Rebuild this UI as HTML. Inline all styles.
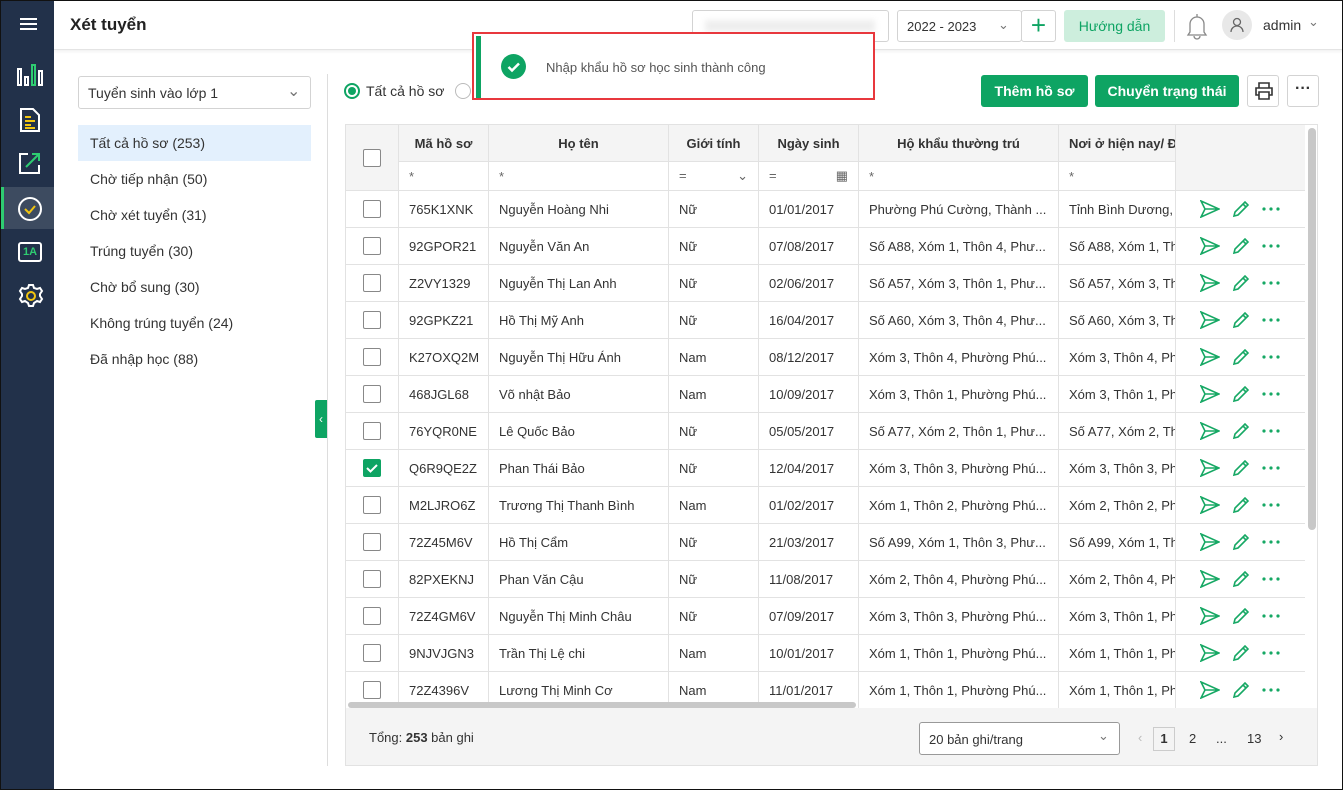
<!DOCTYPE html>
<html><head><meta charset="utf-8"><style>
*{box-sizing:border-box;margin:0;padding:0}
body{width:1343px;height:790px;overflow:hidden;font-family:"Liberation Sans",sans-serif;font-size:13px;color:#333;background:#fff;position:relative}
.frame{position:absolute;inset:0;border:1px solid #111;pointer-events:none;z-index:50}
.side{position:absolute;left:0;top:0;width:54px;height:790px;background:#22314a}
.a{position:absolute}
.top{position:absolute;left:54px;top:0;right:0;height:50px;border-bottom:1px solid #e4e4e4;box-shadow:0 2px 3px rgba(0,0,0,.05)}
.btn{position:absolute;background:#0ea463;color:#fff;font-weight:bold;font-size:14px;border-radius:3px;text-align:center;line-height:32px}
.box{position:absolute;border:1px solid #d3d3d3;border-radius:3px;background:#fff}
.menu div{height:36px;line-height:36px;padding-left:12px;font-size:14px;color:#333}
.tw{position:absolute;left:345px;top:124px;width:960px;height:584px;overflow:hidden}
table{border-collapse:collapse;table-layout:fixed;width:960px}
td,th{border:1px solid #e2e2e2;height:37px;white-space:nowrap;overflow:hidden;padding:0 10px;font-weight:normal;font-size:13px}
th{background:#f4f4f4;font-weight:bold;color:#333;height:37px}
tr.f td{background:#fff;height:29px;color:#666}
td.cb,th.cb{padding:0;text-align:center}
.chk{display:inline-block;width:18px;height:18px;border:1px solid #888;border-radius:2px;vertical-align:middle;background:#fff}
.chk.on{background:#0ea463;border-color:#0ea463;position:relative}
.act{padding:0 0 0 24px;border-right:none}
</style></head><body>
<div class="side">
 <div class="a" style="left:20px;top:18px;width:17px;height:2px;background:#fff;box-shadow:0 5px 0 #fff,0 10px 0 #fff"></div>
 <svg class="a" style="left:16px;top:63px" width="28" height="24" viewBox="0 0 28 24" fill="none" stroke="#fff" stroke-width="2"><rect x="2" y="6" width="3" height="16"/><rect x="9" y="14" width="3" height="8"/><rect x="16" y="2" width="3" height="20" stroke="#2ecc71"/><rect x="23" y="8" width="3" height="14"/></svg>
 <svg class="a" style="left:19px;top:107px" width="22" height="26" viewBox="0 0 22 26" fill="none" stroke="#fff" stroke-width="2"><path d="M2 2h12l6 6v16H2z"/><path d="M6 10h6M6 14h10M6 18h6M6 21h10" stroke="#f1c40f"/></svg>
 <svg class="a" style="left:18px;top:151px" width="24" height="24" viewBox="0 0 24 24" fill="none" stroke="#fff" stroke-width="2"><path d="M10 3H2v19h19v-8"/><path d="M8 16L21 3M14 3h7v7" stroke="#2ecc71"/></svg>
 <div class="a" style="left:0;top:187px;width:54px;height:42px;background:#3d4b60;border-left:4px solid #2ecc71"></div>
 <svg class="a" style="left:17px;top:196px" width="26" height="26" viewBox="0 0 26 26" fill="none" stroke-width="2"><circle cx="13" cy="13" r="11" stroke="#fff"/><path d="M8 13l4 4 6-7" stroke="#f1c40f"/></svg>
 <div class="a" style="left:18px;top:242px;width:24px;height:20px;border:2px solid #fff;border-radius:3px;color:#2ecc71;font-size:11px;font-weight:bold;text-align:center;line-height:16px">1A</div>
 <svg class="a" style="left:18px;top:283px" width="26" height="26" viewBox="0 0 26 26" fill="none" stroke-width="2"><path d="M11 2h4l1 3 3 1 3-1 2 3-2 3v2l2 3-2 3-3-1-3 2-1 3h-4l-1-3-3-2-3 1-2-3 2-3v-2L2 8l2-3 3 1 3-1z" stroke="#fff"/><circle cx="13" cy="13" r="4" stroke="#f1c40f"/></svg>
</div>
<div class="top">
 <div class="a" style="left:16px;top:15px;font-size:17px;font-weight:bold;color:#222">Xét tuyển</div>
 <div class="box" style="left:638px;top:10px;width:197px;height:32px"><div class="a" style="left:12px;top:9px;width:170px;height:12px;background:#eee;filter:blur(3px)"></div></div>
 <div class="box" style="left:843px;top:10px;width:125px;height:32px"><span class="a" style="left:9px;top:8px">2022 - 2023</span><span class="a" style="left:100px;top:6px;color:#777">⌄</span></div>
 <div class="box" style="left:967px;top:10px;width:35px;height:32px;color:#0ea463;font-size:26px;text-align:center;line-height:28px">+</div>
 <div class="a" style="left:1010px;top:10px;width:101px;height:32px;background:#cdeedd;color:#0ea463;border-radius:3px;text-align:center;line-height:32px;font-size:14px">Hướng dẫn</div>
 <div class="a" style="left:1120px;top:10px;width:1px;height:32px;background:#ddd"></div>
 <svg class="a" style="left:1132px;top:12px" width="22" height="28" viewBox="0 0 22 28" fill="none" stroke="#888" stroke-width="1.3"><path d="M11 2v3M4 20V12a7 7 0 0114 0v8l2 3H2z M8 24a3 3 0 006 0"/></svg>
 <div class="a" style="left:1168px;top:10px;width:30px;height:30px;border-radius:50%;background:#e8e8e8"></div>
 <svg class="a" style="left:1176px;top:17px" width="14" height="16" viewBox="0 0 14 16" fill="none" stroke="#666" stroke-width="1.3"><circle cx="7" cy="5" r="3.5"/><path d="M1 15a6 6 0 0112 0"/></svg>
 <span class="a" style="left:1209px;top:17px;font-size:14px">admin</span><span class="a" style="left:1254px;top:14px;color:#777">⌄</span>
</div>
<div class="box" style="left:78px;top:76px;width:233px;height:33px"><span class="a" style="left:9px;top:8px;font-size:14px">Tuyển sinh vào lớp 1</span><span class="a" style="left:208px;top:4px;color:#777;font-size:16px">⌄</span></div>
<div class="menu a" style="left:78px;top:125px;width:233px">
 <div style="background:#e3f0fd">Tất cả hồ sơ (253)</div><div>Chờ tiếp nhận (50)</div><div>Chờ xét tuyển (31)</div><div>Trúng tuyển (30)</div><div>Chờ bổ sung (30)</div><div>Không trúng tuyển (24)</div><div>Đã nhập học (88)</div>
</div>
<div class="a" style="left:327px;top:74px;width:1px;height:692px;background:#ddd"></div>
<div class="a" style="left:315px;top:400px;width:12px;height:38px;background:#0ea463;color:#fff;font-size:12px;text-align:center;line-height:38px;border-radius:2px 0 0 2px">‹</div>
<div class="a" style="left:344px;top:83px;width:16px;height:16px;border:2px solid #0ea463;border-radius:50%"><div style="margin:2px;width:8px;height:8px;border-radius:50%;background:#0ea463"></div></div>
<span class="a" style="left:366px;top:83px;font-size:14px">Tất cả hồ sơ</span>
<div class="a" style="left:455px;top:83px;width:16px;height:16px;border:1px solid #bbb;border-radius:50%"></div>
<div class="btn" style="left:981px;top:75px;width:107px">Thêm hồ sơ</div>
<div class="btn" style="left:1095px;top:75px;width:144px">Chuyển trạng thái</div>
<div class="box" style="left:1247px;top:75px;width:32px;height:32px"><svg style="margin:6px 7px" width="18" height="18" viewBox="0 0 18 18" fill="none" stroke="#333" stroke-width="1.6"><path d="M4 6V1h10v5M4 13H1V6h16v7h-3M4 10h10v7H4z"/></svg></div>
<div class="box" style="left:1287px;top:75px;width:32px;height:32px;text-align:center;font-weight:bold;line-height:26px;font-size:16px">···</div>
<div class="a" style="left:345px;top:124px;width:973px;height:642px;border:1px solid #e2e2e2;background:#f4f4f4"></div>
<div class="a" style="left:1305px;top:125px;width:12px;height:583px;background:#fff"></div>
<div class="tw">
<table>
<colgroup><col style="width:53px"><col style="width:90px"><col style="width:180px"><col style="width:90px"><col style="width:100px"><col style="width:200px"><col style="width:117px"><col style="width:130px"></colgroup>
<tr><th class="cb" rowspan="2" style="height:66px"><span class="chk"></span></th><th>Mã hồ sơ</th><th>Họ tên</th><th>Giới tính</th><th>Ngày sinh</th><th>Hộ khẩu thường trú</th><th style="text-align:left">Nơi ở hiện nay/ Đ</th><th rowspan="2" style="background:#f4f4f4;border-top:none;border-right:none"></th></tr>
<tr class="f"><td>*</td><td>*</td><td>= <span style="float:right">⌄</span></td><td>= <span style="float:right">▦</span></td><td>*</td><td>*</td></tr>
<tbody id="tb" style="background:#fff"></tbody>
</table>
</div>
<div class="a" style="left:1308px;top:128px;width:8px;height:402px;background:#c8c8c8;border-radius:4px"></div>
<div class="a" style="left:348px;top:702px;width:508px;height:6px;background:#c8c8c8;border-radius:3px"></div>
<span class="a" style="left:369px;top:730px">Tổng: <b>253</b> bản ghi</span>
<div class="box" style="left:919px;top:722px;width:201px;height:33px;border-color:#999"><span class="a" style="left:9px;top:9px">20 bản ghi/trang</span><span class="a" style="left:178px;top:5px;color:#777">⌄</span></div>
<span class="a" style="left:1138px;top:730px;color:#bbb">‹</span>
<div class="a" style="left:1153px;top:727px;width:22px;height:24px;border:1px solid #ccc;text-align:center;line-height:22px;font-weight:bold">1</div>
<span class="a" style="left:1189px;top:731px">2</span><span class="a" style="left:1216px;top:731px">...</span><span class="a" style="left:1247px;top:731px">13</span><span class="a" style="left:1279px;top:729px">›</span>
<div class="a" style="left:472px;top:32px;width:403px;height:68px;border:2px solid #e8383d;background:#fff;z-index:10">
 <div class="a" style="left:2px;top:2px;width:5px;height:62px;background:#0ea463"></div>
 <div class="a" style="left:27px;top:20px;width:25px;height:25px;border-radius:50%;background:#0ea463"><svg width="25" height="25" viewBox="0 0 25 25" fill="none" stroke="#fff" stroke-width="2.5"><path d="M7.5 13l3.5 3.5 7-7"/></svg></div>
 <span class="a" style="left:72px;top:26px;color:#555">Nhập khẩu hồ sơ học sinh thành công</span>
</div>
<div class="frame"></div>
<script>
var d=[["765K1XNK","Nguyễn Hoàng Nhi","Nữ","01/01/2017","Phường Phú Cường, Thành ...","Tỉnh Bình Dương, Thành"],
["92GPOR21","Nguyễn Văn An","Nữ","07/08/2017","Số A88, Xóm 1, Thôn 4, Phư...","Số A88, Xóm 1, Thôn"],
["Z2VY1329","Nguyễn Thị Lan Anh","Nữ","02/06/2017","Số A57, Xóm 3, Thôn 1, Phư...","Số A57, Xóm 3, Thôn"],
["92GPKZ21","Hồ Thị Mỹ Anh","Nữ","16/04/2017","Số A60, Xóm 3, Thôn 4, Phư...","Số A60, Xóm 3, Thôn"],
["K27OXQ2M","Nguyễn Thị Hữu Ánh","Nam","08/12/2017","Xóm 3, Thôn 4, Phường Phú...","Xóm 3, Thôn 4, Phường"],
["468JGL68","Võ nhật Bảo","Nam","10/09/2017","Xóm 3, Thôn 1, Phường Phú...","Xóm 3, Thôn 1, Phường"],
["76YQR0NE","Lê Quốc Bảo","Nữ","05/05/2017","Số A77, Xóm 2, Thôn 1, Phư...","Số A77, Xóm 2, Thôn"],
["Q6R9QE2Z","Phan Thái Bảo","Nữ","12/04/2017","Xóm 3, Thôn 3, Phường Phú...","Xóm 3, Thôn 3, Phường"],
["M2LJRO6Z","Trương Thị Thanh Bình","Nam","01/02/2017","Xóm 1, Thôn 2, Phường Phú...","Xóm 2, Thôn 2, Phường"],
["72Z45M6V","Hồ Thị Cẩm","Nữ","21/03/2017","Số A99, Xóm 1, Thôn 3, Phư...","Số A99, Xóm 1, Thôn"],
["82PXEKNJ","Phan Văn Cậu","Nữ","11/08/2017","Xóm 2, Thôn 4, Phường Phú...","Xóm 2, Thôn 4, Phường"],
["72Z4GM6V","Nguyễn Thị Minh Châu","Nữ","07/09/2017","Xóm 3, Thôn 3, Phường Phú...","Xóm 3, Thôn 1, Phường"],
["9NJVJGN3","Trần Thị Lệ chi","Nam","10/01/2017","Xóm 1, Thôn 1, Phường Phú...","Xóm 1, Thôn 1, Phường"],
["72Z4396V","Lương Thị Minh Cơ","Nam","11/01/2017","Xóm 1, Thôn 1, Phường Phú...","Xóm 1, Thôn 1, Phường"]];
var ic='<svg width="20" height="18" viewBox="0 0 20 18" fill="none" stroke="#16a864" stroke-width="1.6" style="vertical-align:middle"><path d="M1 1l18 8-18 8 4-8zM5 9h14"/></svg><svg style="margin-left:12px;vertical-align:middle" width="18" height="18" viewBox="0 0 18 18" fill="none" stroke="#16a864" stroke-width="1.6"><path d="M2 16l1-4L13 2l3 3L6 15zM11 4l3 3"/></svg><svg style="margin-left:12px;vertical-align:middle" width="18" height="4" viewBox="0 0 18 4" fill="#16a864"><circle cx="2" cy="2" r="1.6"/><circle cx="9" cy="2" r="1.6"/><circle cx="16" cy="2" r="1.6"/></svg>';
var h='';d.forEach(function(r,i){h+='<tr><td class="cb">'+(i==7?'<span class="chk on"><svg width="16" height="16" viewBox="0 0 16 16" fill="none" stroke="#fff" stroke-width="2" style="position:absolute;left:0;top:0"><path d="M3 8l3.5 3.5L13 5"/></svg></span>':'<span class="chk"></span>')+'</td>';for(var j=0;j<6;j++)h+='<td'+(j==5?' style="text-overflow:clip"':'')+'>'+r[j]+'</td>';h+='<td class="act">'+ic+'</td></tr>';});
document.getElementById('tb').innerHTML=h;
</script>
</body></html>
